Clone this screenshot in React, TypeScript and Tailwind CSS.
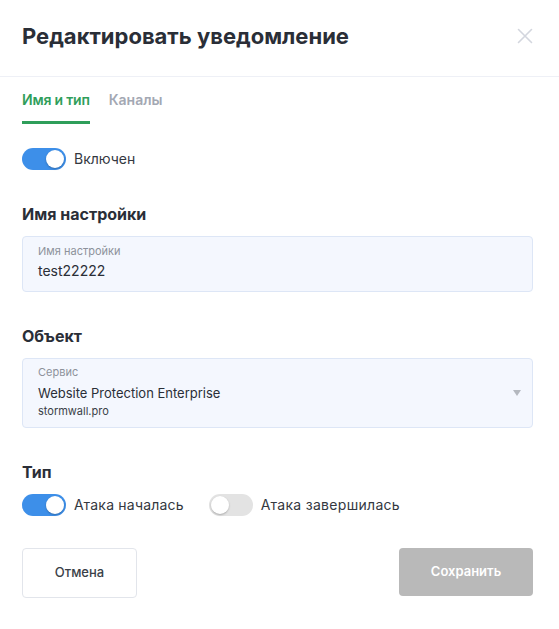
import React from "react";

function Toggle({ on }: { on: boolean }) {
  return (
    <div
      className={
        "relative h-[22px] w-[44px] shrink-0 rounded-full " +
        (on ? "bg-[#3d8fe9]" : "bg-[#e3e3e3]")
      }
    >
      <div
        className={
          "absolute top-[2px] h-[18px] w-[18px] rounded-full bg-white shadow-[0_1px_2px_rgba(0,0,0,0.25)] " +
          (on ? "left-[24px]" : "left-[2px]")
        }
      />
    </div>
  );
}

export default function App() {
  return (
    <div
      className="min-h-[629px] w-[559px] bg-white text-[#2a2e37]"
      style={{ fontFamily: "Inter, 'Noto Sans', sans-serif" }}
    >
      <div className="flex h-[77px] items-center justify-between border-b border-[#eef0f6] pl-[22px] pr-[26px]">
        <h1 className="mb-[5px] text-[22px] font-bold leading-[28px] text-[#2a2e37]">
          Редактировать уведомление
        </h1>
        <svg width="16" height="16" viewBox="0 0 16 16" className="mb-[5px]">
          <path d="M1.5 1.5 L14.5 14.5 M14.5 1.5 L1.5 14.5" stroke="#d3d6de" strokeWidth="1.6" strokeLinecap="round" />
        </svg>
      </div>

      <div className="pl-[22px] pr-[26px]">
        <div className="flex gap-[19px] pt-[13px]">
          <div className="border-b-[3px] border-[#2f9e5a] pb-[11px] text-[14px] font-semibold leading-[20px] tracking-[-0.2px] text-[#2f9e5a]">
            Имя и тип
          </div>
          <div className="pb-[11px] text-[14px] font-semibold leading-[20px] text-[#a3a8b3]">
            Каналы
          </div>
        </div>

        <div className="mt-[24px] flex items-center gap-[8px]">
          <Toggle on />
          <span className="text-[14px] leading-[20px] text-[#34383f]">Включен</span>
        </div>

        <div className="mt-[32px] text-[16px] font-bold leading-[24px]">Имя настройки</div>
        <div className="mt-[10px] h-[56px] rounded-[4px] border border-[#dde6f6] bg-[#f4f7fe] px-[15px] pt-[7px]">
          <div className="text-[11px] leading-[14px] text-[#8d929b]">Имя настройки</div>
          <div className="mt-[3px] text-[14px] leading-[20px] text-[#2a2e37]">test22222</div>
        </div>

        <div className="mt-[32px] text-[16px] font-bold leading-[24px]">Объект</div>
        <div className="mt-[10px] flex h-[70px] items-center rounded-[4px] border border-[#dde6f6] bg-[#f4f7fe] pl-[15px] pr-[11px]">
          <div className="flex-1 self-start pt-[6px]">
            <div className="text-[11px] leading-[14px] text-[#8d929b]">Сервис</div>
            <div className="mt-[4px] text-[13px] leading-[20px] text-[#2a2e37]">
              Website Protection Enterprise
            </div>
            <div className="text-[11px] leading-[16px] text-[#3a3f48]">stormwall.pro</div>
          </div>
          <svg width="8" height="6" viewBox="0 0 8 6">
            <path d="M0 0 L8 0 L4 6 Z" fill="#b4b8bf" />
          </svg>
        </div>

        <div className="mt-[32px] text-[16px] font-bold leading-[24px]">Тип</div>
        <div className="mt-[10px] flex items-center">
          <Toggle on />
          <span className="ml-[8px] text-[14px] leading-[20px] tracking-[0.2px] text-[#34383f]">Атака началась</span>
          <div className="ml-[25px]">
            <Toggle on={false} />
          </div>
          <span className="ml-[8px] text-[14px] leading-[20px] tracking-[0.3px] text-[#34383f]">Атака завершилась</span>
        </div>

        <div className="mt-[32px] flex items-start justify-between">
          <button className="h-[50px] w-[115px] rounded-[4px] border border-[#e2e5eb] bg-white text-[13px] font-medium text-[#3a3f48]">
            Отмена
          </button>
          <button className="h-[48px] w-[134px] rounded-[4px] bg-[#b9b9b9] text-[13px] font-semibold text-white">
            Сохранить
          </button>
        </div>
      </div>
    </div>
  );
}
